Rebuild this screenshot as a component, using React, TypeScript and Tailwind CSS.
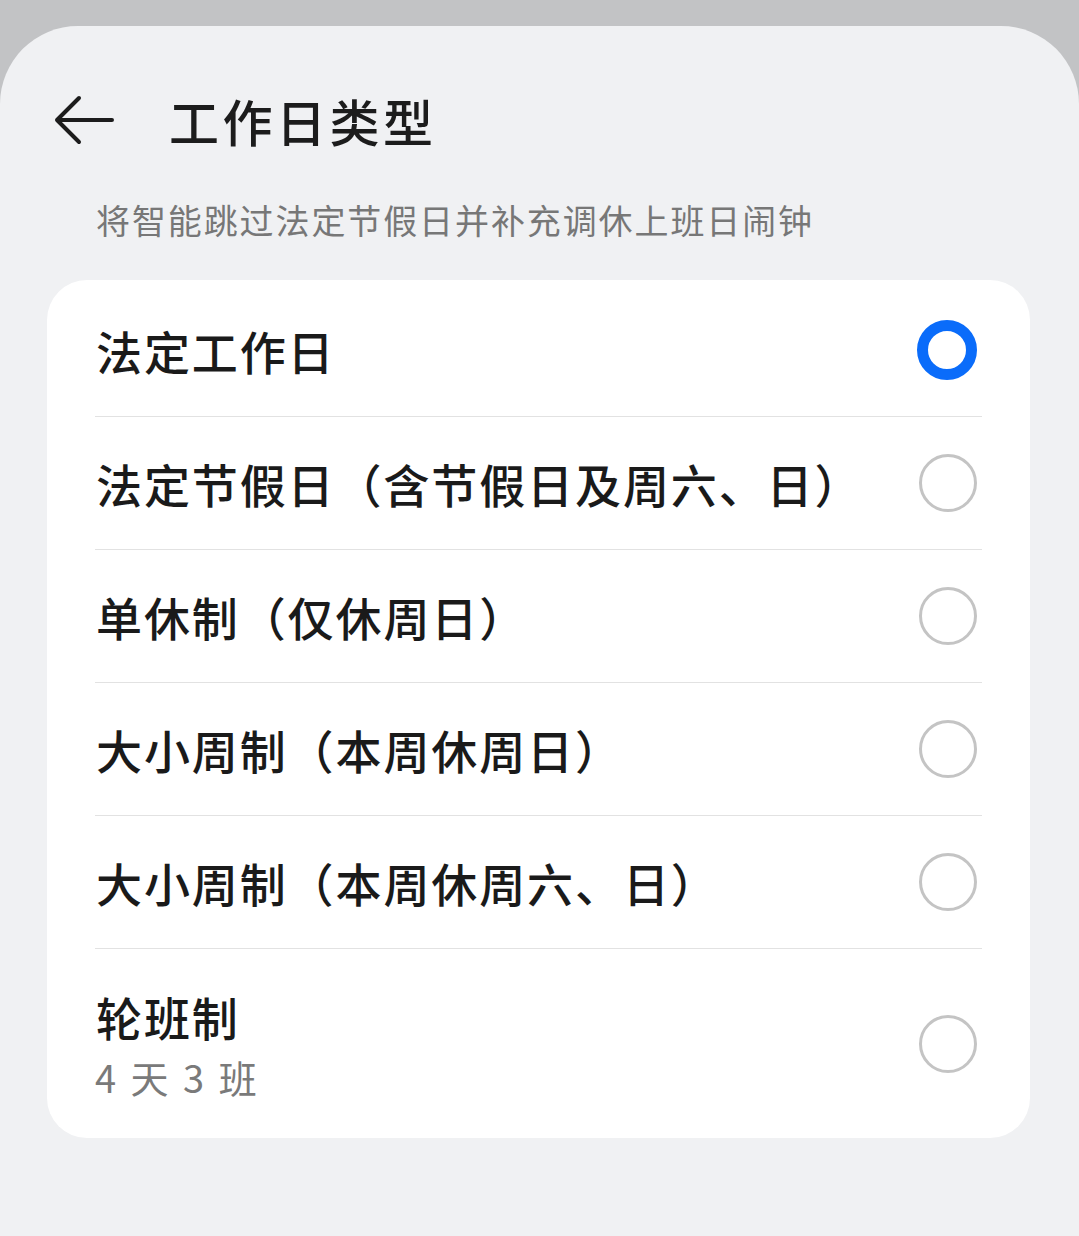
const FONT = { fontFamily: '"Noto Sans CJK SC", "Noto Sans", sans-serif' };

type Option = { label: string; sub?: string; h: string };

const OPTIONS: Option[] = [
  { label: "法定工作日", h: "h-[136px] pt-[4px]" },
  { label: "法定节假日（含节假日及周六、日）", h: "h-[132px]" },
  { label: "单休制（仅休周日）", h: "h-[132px]" },
  { label: "大小周制（本周休周日）", h: "h-[132px]" },
  { label: "大小周制（本周休周六、日）", h: "h-[132px]" },
  { label: "轮班制", sub: "4 天 3 班", h: "h-[189px]" },
];

const Radio = ({ checked }: { checked: boolean }) =>
  checked ? (
    <div className="w-[60px] h-[60px] rounded-full border-[11px] border-[#0a6cfa] bg-white" />
  ) : (
    <div className="w-[58px] h-[58px] rounded-full border-[3px] border-[#c4c4c4] bg-white" />
  );

export default function App() {
  const selected = 0;
  return (
    <div className="min-h-[1236px] bg-[#c2c3c5] pt-[26px]" style={FONT}>
      <div className="h-[1210px] bg-[#f0f1f3] rounded-t-[78px] pt-[44px]">
        {/* Header */}
        <div className="flex items-center h-[100px]">
          <svg className="ml-[52px]" width="62" height="50" viewBox="0 0 62 50" fill="none">
            <path d="M60 25H5M27 3L5 25L27 47" stroke="#1c1c1c" strokeWidth="4" strokeLinecap="round" strokeLinejoin="round" />
          </svg>
          <h1 className="ml-[55px] text-[50px] leading-none font-medium text-[#1c1c1c] tracking-[3.5px]">工作日类型</h1>
        </div>

        <p className="ml-[96px] mt-[25px] text-[34px] leading-[50px] text-[#777] tracking-[1.9px]">
          将智能跳过法定节假日并补充调休上班日闹钟
        </p>

        {/* Options card */}
        <div className="ml-[47px] mt-[35px] w-[983px] bg-white rounded-[40px] px-[48px]">
          {OPTIONS.map((o, i) => (
            <div key={o.label}>
              <div className={`flex items-center justify-between ${o.h}`}>
                <div className="flex flex-col">
                  <span className="text-[46px] leading-[60px] font-medium text-[#1a1a1a] tracking-[1.9px] ml-[1px]">
                    {o.label}
                  </span>
                  {o.sub && (
                    <span className="text-[38px] leading-[50px] text-[#7a7a7a] tracking-[3px] mt-[6px]">{o.sub}</span>
                  )}
                </div>
                <div className="mr-[5px]">
                  <Radio checked={i === selected} />
                </div>
              </div>
              {i < OPTIONS.length - 1 && <div className="h-px bg-[#e2e2e2]" />}
            </div>
          ))}
        </div>
      </div>
    </div>
  );
}
